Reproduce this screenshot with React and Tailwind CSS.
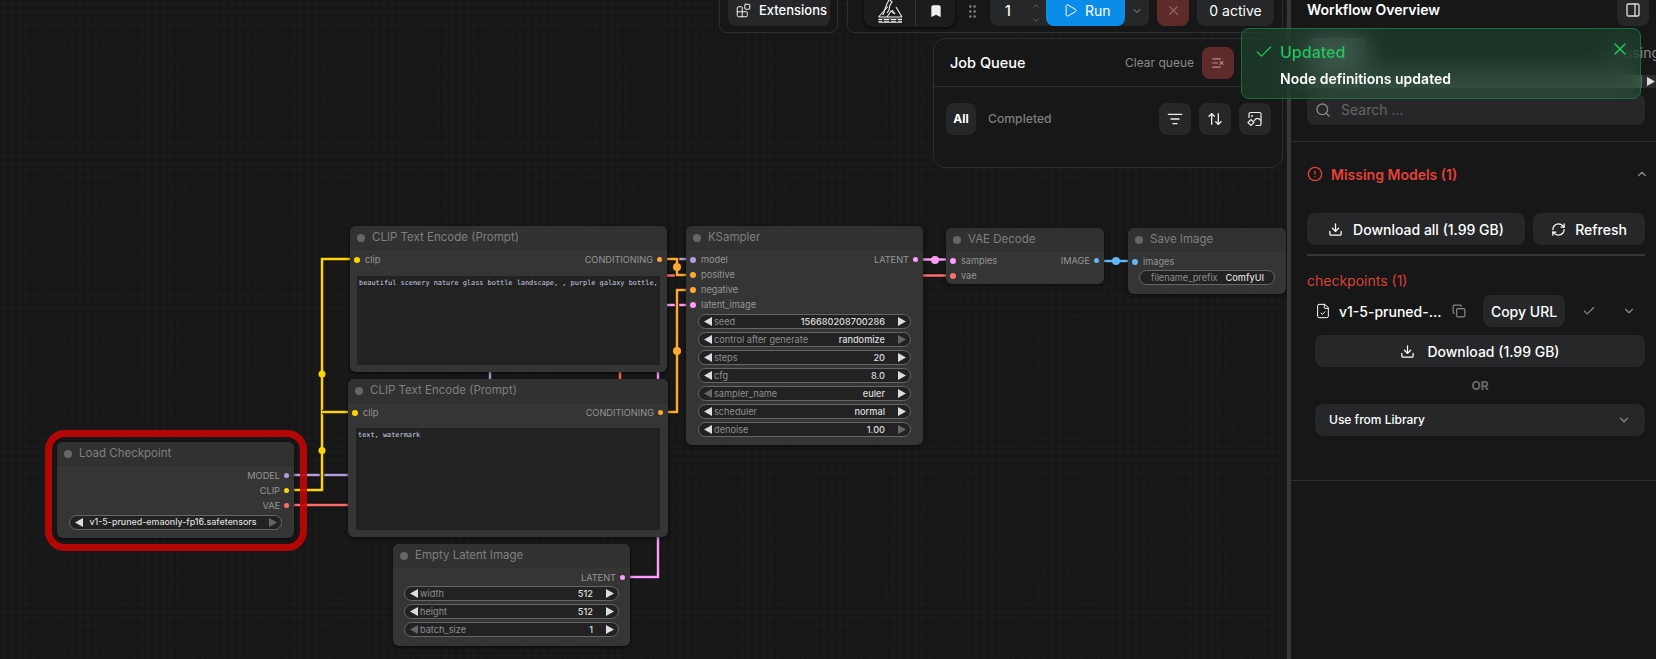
import React from "react";
import {
  Blocks, Bookmark, GripVertical, ChevronUp, ChevronDown, Play, X, ListX, ListFilter,
  ArrowUpDown, Search, CircleAlert, Download, RefreshCw, FileCheck, Copy, Check, PanelRight,
} from "lucide-react";

const C = {
  model: "#b39ddb", clip: "#ffd500", vae: "#ff6e6e", cond: "#ffa931", latent: "#ff9cf9", image: "#64b5f6",
};

function Tri({ dir, dim }) {
  return (
    <svg width="8" height="9" viewBox="0 0 8 9" className="shrink-0">
      <polygon points={dir === "l" ? "8,0 8,9 0,4.5" : "0,0 0,9 8,4.5"} fill={dim ? "#666666" : "#dddddd"} />
    </svg>
  );
}

function Widget({ label, value, dimL, dimR, center }) {
  return (
    <div className="h-[15px] flex items-center rounded-full border border-[#666666] bg-[#222222] pl-[5px] pr-[4px] text-[9.2px] leading-none">
      <Tri dir="l" dim={dimL} />
      {center ? (
        <span className="flex-1 text-center font-medium text-[#dddddd] text-[8.9px] whitespace-nowrap pr-[6px]">{value}</span>
      ) : (
        <>
          <span className="ml-[2px] text-[#8f8f8f] flex-1 whitespace-nowrap">{label}</span>
          <span className="text-[#dddddd] font-medium mr-[13px]">{value}</span>
        </>
      )}
      <Tri dir="r" dim={dimR} />
    </div>
  );
}

function SlotIn({ color, label }) {
  return (
    <div className="h-[15px] flex items-center text-[9.2px] text-[#969696] leading-none">
      <span className="w-[6px] h-[6px] rounded-full ml-[4px] mr-[5px] shrink-0" style={{ background: color }} />
      {label}
    </div>
  );
}

function SlotOut({ color, label }) {
  return (
    <div className="h-[15px] flex items-center justify-end text-[9.2px] text-[#969696] leading-none">
      {label}
      <span className="w-[5px] h-[5px] rounded-full ml-[4px] mr-[5px] shrink-0" style={{ background: color }} />
    </div>
  );
}

function Node({ className, title, children }) {
  return (
    <div className={"absolute z-10 rounded-[6px] bg-[#353535] shadow-[0_1px_4px_rgba(0,0,0,0.6)] " + className}>
      <div className="h-[24px] flex items-center bg-[#313131] rounded-t-[6px] border-b border-[#2d2d2d] pl-[7px] text-[11.5px] text-[#7f7f7f]">
        <span className="w-[8px] h-[8px] rounded-full bg-[#666666] mr-[7px]" />
        {title}
      </div>
      {children}
    </div>
  );
}

function TextBox({ text, className }) {
  return (
    <div className={"bg-[#222222] text-[#c9d3e6] text-[6.9px] leading-[9px] font-['DejaVu_Sans_Mono',monospace] pl-[2px] pt-[3px] whitespace-pre overflow-hidden " + className}>
      {text}
    </div>
  );
}

function Wire({ d, color }) {
  return (
    <>
      <path d={d} fill="none" stroke="#101010" strokeWidth="4.5" />
      <path d={d} fill="none" stroke={color} strokeWidth="2.5" />
    </>
  );
}

function Wires() {
  return (
    <svg className="absolute inset-0 w-[1287px] h-[659px]" viewBox="0 0 1287 659">
      <Wire d="M287 475 H490 V259 H697" color={C.model} />
      <Wire d="M287 505 H620 V275.5 H954" color={C.vae} />
      <Wire d="M287 490 H322 V259 H357" color={C.clip} />
      <Wire d="M322 412 H356" color={C.clip} />
      <circle cx="322" cy="450.5" r="3.5" fill={C.clip} />
      <circle cx="322" cy="374" r="3.5" fill={C.clip} />
      <Wire d="M623 577 H658 V305 H694" color={C.latent} />
      <Wire d="M661 259 H677 V275 H694" color={C.cond} />
      <Wire d="M661 412 H677 V290 H694" color={C.cond} />
      <circle cx="677" cy="267" r="4" fill={C.cond} />
      <circle cx="677" cy="351" r="4" fill={C.cond} />
      <Wire d="M916 259.5 H954" color={C.latent} />
      <circle cx="935" cy="260" r="4" fill={C.latent} />
      <Wire d="M1097 261 H1136" color={C.image} />
      <circle cx="1116" cy="261" r="4" fill={C.image} />
    </svg>
  );
}

function Logo() {
  return (
    <svg width="26" height="24" viewBox="0 0 26 24" fill="none" stroke="#eeeeee" strokeWidth="1.1">
      <path d="M1.5 17 L11 6.5 M10 17 L14 11 L18 14 M19 7 L25 17 M1.5 17 H25" />
      <path d="M12 0 C10 3 9 6 8 9 L6 15 M13 0 L15 2 L13 5 L12 10 L10 13 M15 10 L18 14" />
      <path d="M1.5 19.5 H25 M1.5 22 H25" strokeWidth="1.4" />
      <path d="M6 19 V22 M13 19 V22 M20 19 V22" stroke="#1c1c1c" strokeWidth="1.5" />
    </svg>
  );
}

function AssetIcon() {
  return (
    <svg width="16" height="16" viewBox="0 0 16 16" fill="none" stroke="#eeeeee" strokeWidth="1.2">
      <path d="M2 7 V3 A1.5 1.5 0 0 1 3.5 1.5 H12.5 A1.5 1.5 0 0 1 14 3 V13 A1.5 1.5 0 0 1 12.5 14.5 H8.5" />
      <circle cx="5" cy="5" r="1" fill="#eeeeee" stroke="none" />
      <path d="M7 10 C9 6.5 11 6.5 14 9.5" />
      <path d="M4 8.5 L7 11.5 L4 14.5 L1 11.5 Z" />
    </svg>
  );
}

function Btn({ className, children }) {
  return <div className={"flex items-center justify-center rounded-lg bg-[#262729] " + className}>{children}</div>;
}

function Canvas() {
  return (
    <div className="relative w-[1287px] h-full shrink-0 overflow-hidden bg-[#191919] bg-[linear-gradient(#141414_1px,transparent_1px),linear-gradient(90deg,#141414_1px,transparent_1px)] bg-[size:7.6px_7.6px]">
      <Wires />

      <Node className="left-[350px] top-[226px] w-[317px] h-[146px]" title="CLIP Text Encode (Prompt)">
        <div className="pt-[2px] flex justify-between">
          <SlotIn color={C.clip} label="clip" />
          <SlotOut color={C.cond} label="CONDITIONING" />
        </div>
        <TextBox className="mt-[9px] mx-[7px] h-[89px]" text="beautiful scenery nature glass bottle landscape, , purple galaxy bottle," />
      </Node>

      <Node className="left-[348px] top-[379px] w-[320px] h-[158px]" title="CLIP Text Encode (Prompt)">
        <div className="pt-[2px] flex justify-between">
          <SlotIn color={C.clip} label="clip" />
          <SlotOut color={C.cond} label="CONDITIONING" />
        </div>
        <TextBox className="mt-[8px] mx-[8px] h-[102px]" text="text, watermark" />
      </Node>

      <Node className="left-[686px] top-[226px] w-[237px] h-[219px]" title="KSampler">
        <div className="pt-[2px] flex justify-between">
          <div>
            <SlotIn color={C.model} label="model" />
            <SlotIn color={C.cond} label="positive" />
            <SlotIn color={C.cond} label="negative" />
            <SlotIn color={C.latent} label="latent_image" />
          </div>
          <SlotOut color={C.latent} label="LATENT" />
        </div>
        <div className="mt-[2px] mx-[12px] flex flex-col gap-[3px]">
          <Widget label="seed" value="156680208700286" />
          <Widget label="control after generate" value="randomize" dimR />
          <Widget label="steps" value="20" />
          <Widget label="cfg" value="8.0" />
          <Widget label="sampler_name" value="euler" dimL />
          <Widget label="scheduler" value="normal" />
          <Widget label="denoise" value="1.00" dimR />
        </div>
      </Node>

      <Node className="left-[946px] top-[228px] w-[158px] h-[56px]" title="VAE Decode">
        <div className="pt-[1px] flex justify-between">
          <div>
            <SlotIn color={C.latent} label="samples" />
            <SlotIn color={C.vae} label="vae" />
          </div>
          <SlotOut color={C.image} label="IMAGE" />
        </div>
      </Node>

      <Node className="left-[1128px] top-[228px] w-[158px] h-[66px]" title="Save Image">
        <div className="pt-[2px]">
          <SlotIn color={C.image} label="images" />
        </div>
        <div className="mt-[1px] mx-[11px] h-[15px] flex items-center justify-between rounded-full border border-[#666666] bg-[#222222] pl-[11px] pr-[10px] text-[9.2px] leading-none">
          <span className="text-[#8f8f8f]">filename_prefix</span>
          <span className="text-[#dddddd] font-medium">ComfyUI</span>
        </div>
      </Node>

      <Node className="left-[57px] top-[442px] w-[237px] h-[96px]" title="Load Checkpoint">
        <div className="pt-[2px]">
          <SlotOut color={C.model} label="MODEL" />
          <SlotOut color={C.clip} label="CLIP" />
          <SlotOut color={C.vae} label="VAE" />
        </div>
        <div className="mt-[2px] mx-[12px]">
          <Widget center value="v1-5-pruned-emaonly-fp16.safetensors" dimR />
        </div>
      </Node>

      <Node className="left-[393px] top-[544px] w-[237px] h-[102px]" title="Empty Latent Image">
        <div className="pt-[2px]">
          <SlotOut color={C.latent} label="LATENT" />
        </div>
        <div className="mt-[1px] mx-[11px] flex flex-col gap-[3px]">
          <Widget label="width" value="512" />
          <Widget label="height" value="512" />
          <Widget label="batch_size" value="1" dimL />
        </div>
      </Node>

      <div className="absolute z-20 left-[45px] top-[430px] w-[262px] h-[121px] rounded-[20px] border-[7px] border-[rgba(196,4,4,0.9)]" />

      {/* toolbar */}
      <div className="absolute z-30 left-[719px] top-0 flex gap-[9px] text-white">
        <div className="h-[33px] w-[119px] rounded-b-lg border-x border-b border-[#2e2e30] bg-[#171718] pl-[8px]">
          <div className="h-[26px] w-[102px] rounded-b-lg bg-[#262729] flex items-center pl-[8px] pb-[5px] gap-[8px] text-[13px] font-medium">
            <Blocks size={15} strokeWidth={1.5} />
            Extensions
          </div>
        </div>
        <div className="h-[33px] w-[436px] rounded-b-lg border-x border-b border-[#2e2e30] bg-[#171718] pl-[16px] flex items-start">
          <div className="h-[27px] w-[91px] flex rounded-b-lg bg-[#1c1c1c] shadow-[0_1px_3px_rgba(0,0,0,0.9)]">
            <div className="w-[52px] h-full flex items-center justify-center border-r border-[#333333] pb-[3px]">
              <Logo />
            </div>
            <div className="w-[39px] h-full flex items-center justify-center pb-[6px]">
              <Bookmark size={14} fill="#eeeeee" stroke="#eeeeee" />
            </div>
          </div>
          <div className="w-[35px] h-[26px] flex items-center justify-center pb-[4px]">
            <GripVertical size={17} stroke="#8a8a8a" strokeWidth={1.5} />
          </div>
          <div className="h-[26px] w-[159px] flex items-center rounded-b-lg bg-[#262729]">
            <span className="w-[36px] text-center text-[14px] font-medium pb-[5px]">1</span>
            <div className="w-[20px] flex flex-col items-center gap-[4px] text-[#6a6a6a]">
              <ChevronUp size={10} />
              <ChevronDown size={10} />
            </div>
            <div className="h-full w-[79px] rounded-b-lg bg-[#0b8ce9] flex items-center pl-[17px] pb-[5px] gap-[7px] text-[14px]">
              <Play size={15} strokeWidth={1.6} />
              Run
            </div>
            <ChevronDown size={12} className="ml-[6px] mb-[5px] text-[#9a9a9a]" />
          </div>
          <div className="ml-[8px] h-[26px] w-[32px] rounded-b-lg bg-[#5f2a2a] flex items-center justify-center pb-[5px]">
            <X size={15} stroke="#8f6666" />
          </div>
          <div className="ml-[8px] h-[26px] w-[77px] rounded-b-lg bg-[#262729] flex items-center justify-center pb-[5px] text-[14px]">
            0 active
          </div>
        </div>
      </div>

      {/* job queue */}
      <div className="absolute z-30 left-[933px] top-[38px] w-[350px] h-[130px] rounded-xl border border-[#2e2e30] bg-[#171718]">
        <div className="h-[48px] flex items-center border-b border-[#2e2e30] pl-[16px] pr-[48px]">
          <span className="text-[14.5px] font-medium text-white flex-1">Job Queue</span>
          <span className="text-[12px] text-[#8a8a8a] mr-[8px]">Clear queue</span>
          <div className="w-[32px] h-[32px] rounded-lg bg-[#5f2a2a] flex items-center justify-center">
            <ListX size={14} stroke="#b08d8d" />
          </div>
        </div>
        <div className="pt-[16px] pl-[12px] flex items-center">
          <Btn className="w-[30px] h-[32px] text-[12px] font-bold text-white">All</Btn>
          <span className="ml-[12px] text-[12.2px] text-[#7d7d7d] font-medium">Completed</span>
          <Btn className="ml-[107px] w-[32px] h-[32px]"><ListFilter size={16} stroke="#eeeeee" /></Btn>
          <Btn className="ml-[8px] w-[32px] h-[32px]"><ArrowUpDown size={16} stroke="#eeeeee" /></Btn>
          <Btn className="ml-[8px] w-[32px] h-[32px]"><AssetIcon /></Btn>
        </div>
      </div>
    </div>
  );
}

function Sidebar() {
  return (
    <aside className="w-[365px] h-full shrink-0 flex flex-col bg-[#171718] text-white">
      <div className="h-[26px] flex items-start justify-between pl-[16px] pr-[7px] shrink-0">
        <span className="text-[14px] font-semibold leading-[20px]">Workflow Overview</span>
        <Btn className="w-[32px] h-[26px] rounded-t-none pb-[6px]"><PanelRight size={16} stroke="#dddddd" /></Btn>
      </div>
      <div className="mt-[12px] h-[28px] flex items-center pl-[16px] text-[14px] text-[#8a8a8a] whitespace-nowrap overflow-hidden justify-between shrink-0">
        <span className="w-[60px] h-[28px] rounded-lg bg-[#5c5c60]" />
        <span className="-mr-[4px]">Missing</span>
      </div>
      <div className="mt-[9px] h-[13px] flex shrink-0">
        <div className="ml-[16px] w-[335px] bg-[#5e5e5e]" />
        <div className="flex-1 bg-[#2c2c2e] flex items-center justify-end pr-[1px]">
          <Tri dir="r" />
        </div>
      </div>
      <div className="mt-[6px] ml-[16px] mr-[11px] h-[31px] rounded-lg bg-[#262729] flex items-center pl-[8px] gap-[10px] text-[14px] text-[#666668] shrink-0">
        <Search size={16} stroke="#8a8a8a" />
        Search ...
      </div>
      <div className="mt-[16px] border-t border-[#2e2e30]" />
      <div className="mt-[21px] h-[22px] ml-[16px] mr-[7px] flex items-center text-[#e5403a] text-[14px] font-semibold">
        <CircleAlert size={16} />
        <span className="ml-[8px] flex-1">Missing Models (1)</span>
        <ChevronUp size={14} stroke="#8a8a8a" />
      </div>
      <div className="mt-[28px] ml-[16px] mr-[11px] flex gap-[8px] text-[14px] font-medium">
        <Btn className="h-[32px] w-[218px] gap-[10px]"><Download size={15} />Download all (1.99 GB)</Btn>
        <Btn className="h-[32px] w-[112px] gap-[9px]"><RefreshCw size={15} />Refresh</Btn>
      </div>
      <div className="mt-[9px] ml-[16px] mr-[11px] h-[2px] bg-[#36363b]" />
      <div className="mt-[15px] ml-[16px] h-[18px] flex items-center text-[14px] text-[#d9403a]">checkpoints (1)</div>
      <div className="mt-[6px] ml-[24px] mr-[11px] h-[32px] flex items-center text-[14px] font-medium">
        <FileCheck size={16} strokeWidth={1.5} className="shrink-0" />
        <span className="ml-[8px] w-[103px]">v1-5-pruned-...</span>
        <Copy size={14} stroke="#8a8a8a" className="ml-[10px]" />
        <Btn className="ml-[17px] w-[82px] h-[32px]">Copy URL</Btn>
        <Check size={14} stroke="#8a8a8a" className="ml-[17px]" />
        <ChevronDown size={14} stroke="#8a8a8a" className="ml-[26px]" />
      </div>
      <Btn className="mt-[8px] ml-[24px] mr-[11px] h-[32px] gap-[12px] text-[14px] font-medium shrink-0"><Download size={15} />Download (1.99 GB)</Btn>
      <div className="h-[37px] ml-[24px] mr-[11px] flex items-center justify-center text-[12px] font-bold text-[#6a6a6a] shrink-0">OR</div>
      <Btn className="ml-[24px] mr-[11px] h-[32px] !justify-between pl-[14px] pr-[14px] text-[12px] font-medium shrink-0">
        Use from Library
        <ChevronDown size={14} stroke="#8a8a8a" />
      </Btn>
      <div className="mt-[44px] border-t border-[#2e2e30]" />
    </aside>
  );
}

export default function App() {
  return (
    <div className="relative w-[1656px] h-[659px] flex overflow-hidden bg-[#191919] font-['Inter',sans-serif]">
      <Canvas />
      <div className="w-[4px] h-full shrink-0 bg-[#38383c]" />
      <Sidebar />
      {/* toast */}
      <div className="absolute z-40 left-[1241px] top-[28px] w-[400px] h-[71px] rounded-lg border border-[#1f6b3d] bg-[rgba(30,95,60,0.42)] backdrop-blur-[12px]">
        <div className="flex items-center h-[45px] pl-[12px]">
          <Check size={20} stroke="#22c55e" strokeWidth={1.5} />
          <span className="ml-[6px] text-[16px] font-medium text-[#22c55e]">Updated</span>
        </div>
        <div className="pl-[38px] -mt-[6px] text-[14px] font-semibold text-white">Node definitions updated</div>
        <X size={20} stroke="#22c55e" strokeWidth={1.8} className="absolute right-[10px] top-[10px]" />
      </div>
    </div>
  );
}
